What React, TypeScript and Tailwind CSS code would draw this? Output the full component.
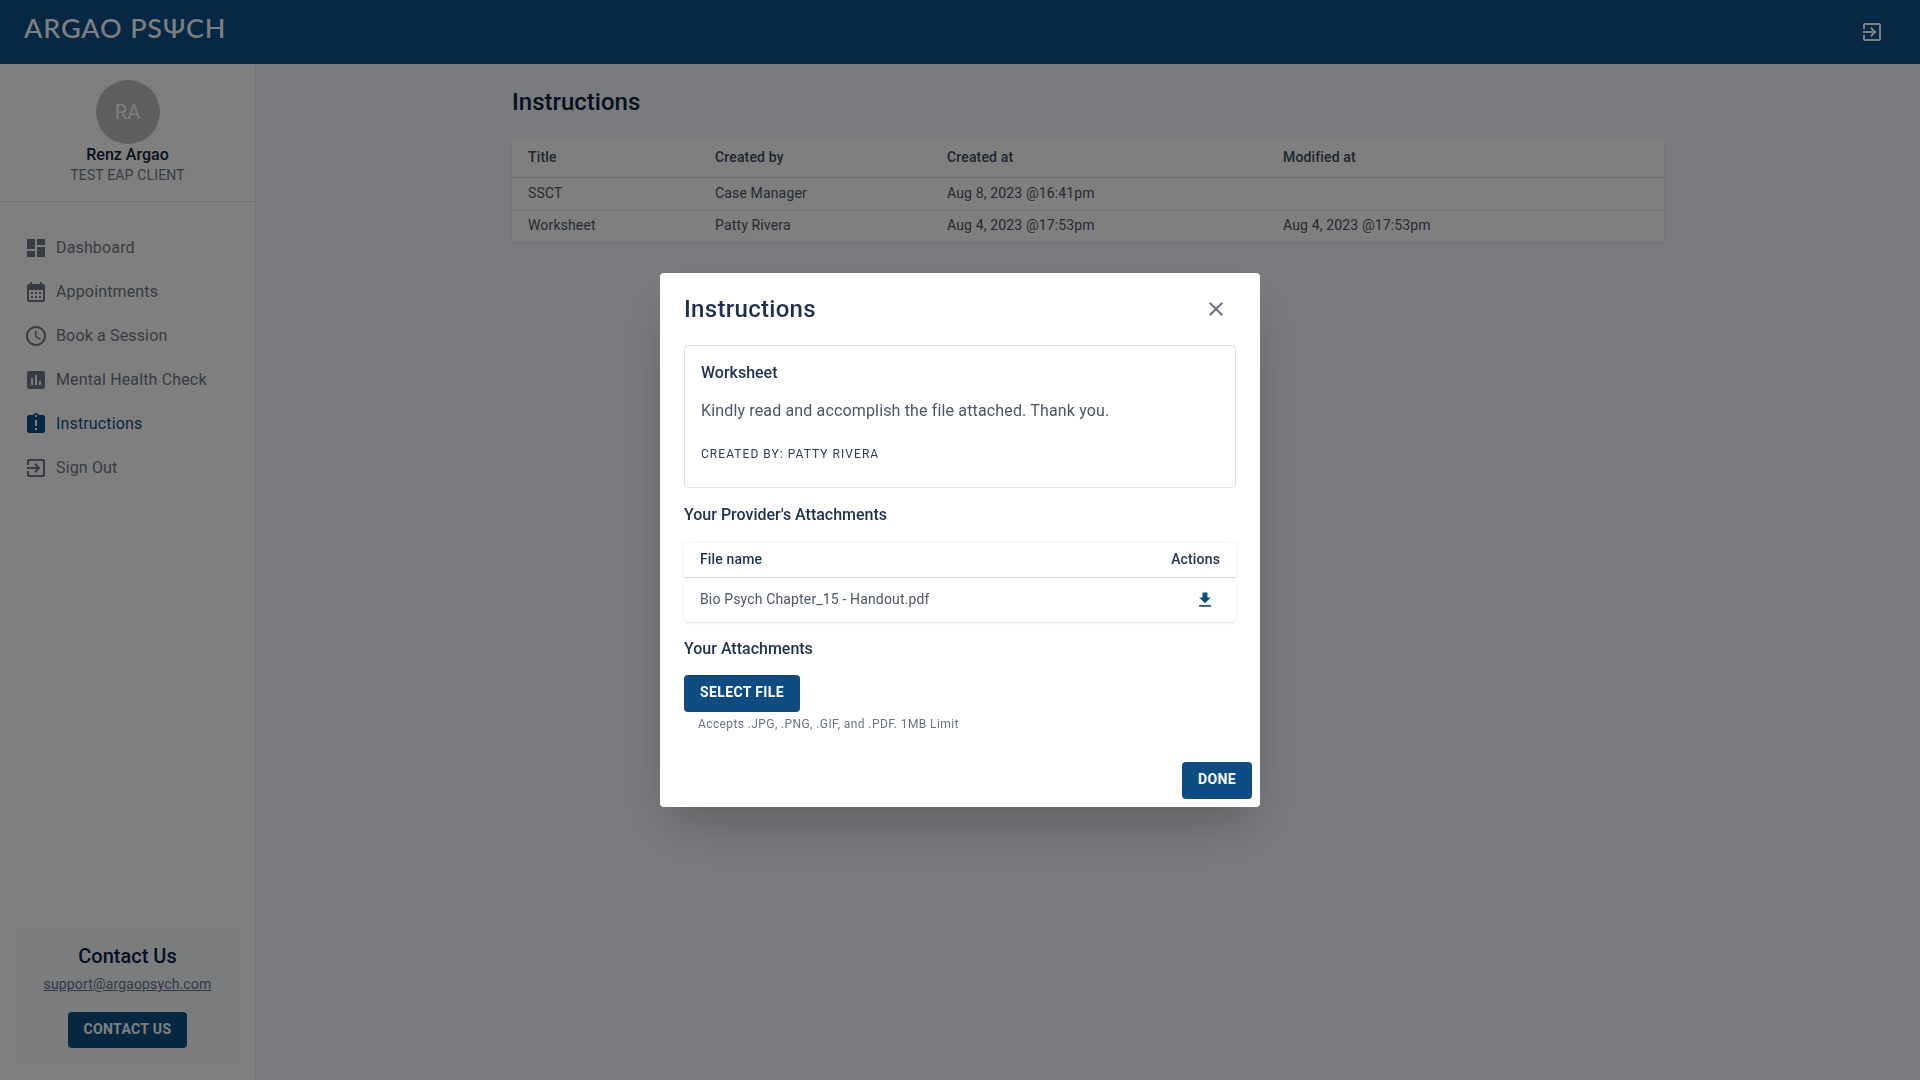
import React from 'react';
import {
  MdDashboard,
  MdCalendarMonth,
  MdOutlineAccessTime,
  MdAssessment,
  MdAssignmentLate,
  MdExitToApp,
  MdClose,
  MdFileDownload,
} from 'react-icons/md';

const navItems = [
  { label: 'Dashboard', icon: MdDashboard },
  { label: 'Appointments', icon: MdCalendarMonth },
  { label: 'Book a Session', icon: MdOutlineAccessTime },
  { label: 'Mental Health Check', icon: MdAssessment },
  { label: 'Instructions', icon: MdAssignmentLate, active: true },
  { label: 'Sign Out', icon: MdExitToApp },
];

const rows = [
  { title: 'SSCT', by: 'Case Manager', created: 'Aug 8, 2023 @16:41pm', modified: '' },
  { title: 'Worksheet', by: 'Patty Rivera', created: 'Aug 4, 2023 @17:53pm', modified: 'Aug 4, 2023 @17:53pm' },
];

const Sidebar = () => (
  <aside className="w-64 shrink-0 bg-white border-r border-gray-200 flex flex-col justify-between">
    <div>
      <div className="h-[138px] border-b border-gray-200 flex flex-col items-center pt-4">
        <div className="w-16 h-16 rounded-full bg-[#bdbdbd] text-white text-xl flex items-center justify-center">RA</div>
        <div className="-mt-[1px] text-base leading-6 font-medium tracking-normal text-[#0f1f3d]">Renz Argao</div>
        <div className="text-sm leading-4 text-[#6f7787]">TEST EAP CLIENT</div>
      </div>
      <nav className="mt-6 pl-6 flex flex-col">
        {navItems.map((item) => {
          const Icon = item.icon;
          return (
            <a
              key={item.label}
              className={`h-11 flex items-center gap-2 text-base ${item.active ? 'text-[#0b4f84]' : 'text-[#6f7787]'}`}
            >
              <Icon size={24} />
              {item.label}
            </a>
          );
        })}
      </nav>
    </div>
    <div className="mx-4 mb-4 h-[136px] bg-[#f6f8fc] flex flex-col items-center pt-4">
      <div className="text-xl leading-6 font-medium tracking-normal text-[#0f1f3d]">Contact Us</div>
      <a className="mt-[6px] text-sm leading-5 underline text-[#64708a]">support@argaopsych.com</a>
      <button className="mt-[18px] h-9 w-[119px] pb-[2px] rounded bg-[#0b4f84] text-white text-sm font-bold tracking-[0.35px]">CONTACT US</button>
    </div>
  </aside>
);

const InstructionsTable = () => (
  <table className="w-full table-fixed bg-white rounded shadow text-sm text-left">
    <colgroup>
      <col className="w-[187px]" />
      <col className="w-[232px]" />
      <col className="w-[336px]" />
      <col />
    </colgroup>
    <thead>
      <tr className="h-[38px] border-b border-gray-300 text-[#3c4860]">
        <th className="pl-4 pb-[2px] font-medium">Title</th>
        <th className="pl-4 pb-[2px] font-medium">Created by</th>
        <th className="pl-4 pb-[2px] font-medium">Created at</th>
        <th className="pl-4 pb-[2px] font-medium">Modified at</th>
      </tr>
    </thead>
    <tbody className="text-gray-600">
      {rows.map((r, i) => (
        <tr key={r.title} className={i === 0 ? 'h-[33px] border-b border-gray-200' : 'h-[32px]'}>
          <td className="pl-4 pb-[2px]">{r.title}</td>
          <td className="pl-4 pb-[2px]">{r.by}</td>
          <td className="pl-4 pb-[2px]">{r.created}</td>
          <td className="pl-4 pb-[2px]">{r.modified}</td>
        </tr>
      ))}
    </tbody>
  </table>
);

const InstructionsModal = () => (
  <div className="fixed inset-0 bg-black/50 flex items-center justify-center">
    <div className="w-[600px] h-[534px] bg-white rounded shadow-2xl px-6 flex flex-col relative">
      <div className="h-[72px] flex items-center justify-between shrink-0">
        <h2 className="text-2xl font-medium tracking-[0.3px] text-[#1e3050]">Instructions</h2>
        <MdClose size={24} className="text-gray-500 mr-2" />
      </div>
      <div className="h-[143px] border border-[#dfe1e6] rounded px-4 shrink-0">
        <div className="mt-[15px] text-base leading-6 font-medium tracking-normal text-[#1e3050]">Worksheet</div>
        <p className="mt-[14px] text-base leading-6 text-[#4a5568]">Kindly read and accomplish the file attached. Thank you.</p>
        <div className="mt-[23px] text-xs leading-4 tracking-[1.05px] text-[#2d3a5a]">CREATED BY: PATTY RIVERA</div>
      </div>
      <h3 className="mt-[15px] text-base leading-6 font-medium tracking-normal text-[#1e3050]">Your Provider's Attachments</h3>
      <div className="mt-[15px] h-[80px] rounded shadow border-t border-gray-100 text-sm">
        <div className="h-[35px] pb-[2px] border-b border-gray-300 px-4 flex items-center justify-between font-medium text-[#1e3050]">
          <span>File name</span>
          <span>Actions</span>
        </div>
        <div className="h-[44px] pl-4 pr-[17px] pb-[2px] flex items-center justify-between text-[#4a5568]">
          <span>Bio Psych Chapter_15 - Handout.pdf</span>
          <MdFileDownload size={20} className="text-[#0b4f84] mr-[4px] mt-[1px]" />
        </div>
      </div>
      <h3 className="mt-[15px] text-base leading-6 font-medium tracking-normal text-[#1e3050]">Your Attachments</h3>
      <button className="mt-[14px] h-[37px] w-[116px] pb-[3px] rounded bg-[#0f4c81] text-white text-sm font-bold tracking-[0.35px]">SELECT FILE</button>
      <p className="mt-[4px] ml-[14px] text-xs leading-4 tracking-[0.4px] text-gray-500">Accepts .JPG, .PNG, .GIF, and .PDF. 1MB Limit</p>
      <button className="absolute right-2 bottom-2 h-[37px] w-[70px] pb-[3px] rounded bg-[#0f4c81] text-white text-sm font-bold tracking-[0.35px]">DONE</button>
    </div>
  </div>
);

export default function App() {
  return (
    <div className="h-screen flex flex-col overflow-hidden font-['Roboto',sans-serif] tracking-[0.15px] bg-[#f4f7fd]">
      <header className="h-16 shrink-0 bg-[#0c5088] flex items-center justify-between pl-6 pr-[36px]">
        <div className="-mt-[8px] text-[27px] leading-8 text-white font-['Lato',sans-serif] font-medium tracking-[0.85px]">ARGAO PSΨCH</div>
        <MdExitToApp size={24} className="text-white" />
      </header>
      <div className="flex-1 flex min-h-0">
        <Sidebar />
        <main className="flex-1 min-w-0">
          <div className="mx-auto max-w-6xl">
            <h1 className="mt-5 mb-[19px] text-2xl leading-9 font-medium tracking-normal text-[#0f1f3d]">Instructions</h1>
            <InstructionsTable />
          </div>
        </main>
      </div>
      <InstructionsModal />
    </div>
  );
}
